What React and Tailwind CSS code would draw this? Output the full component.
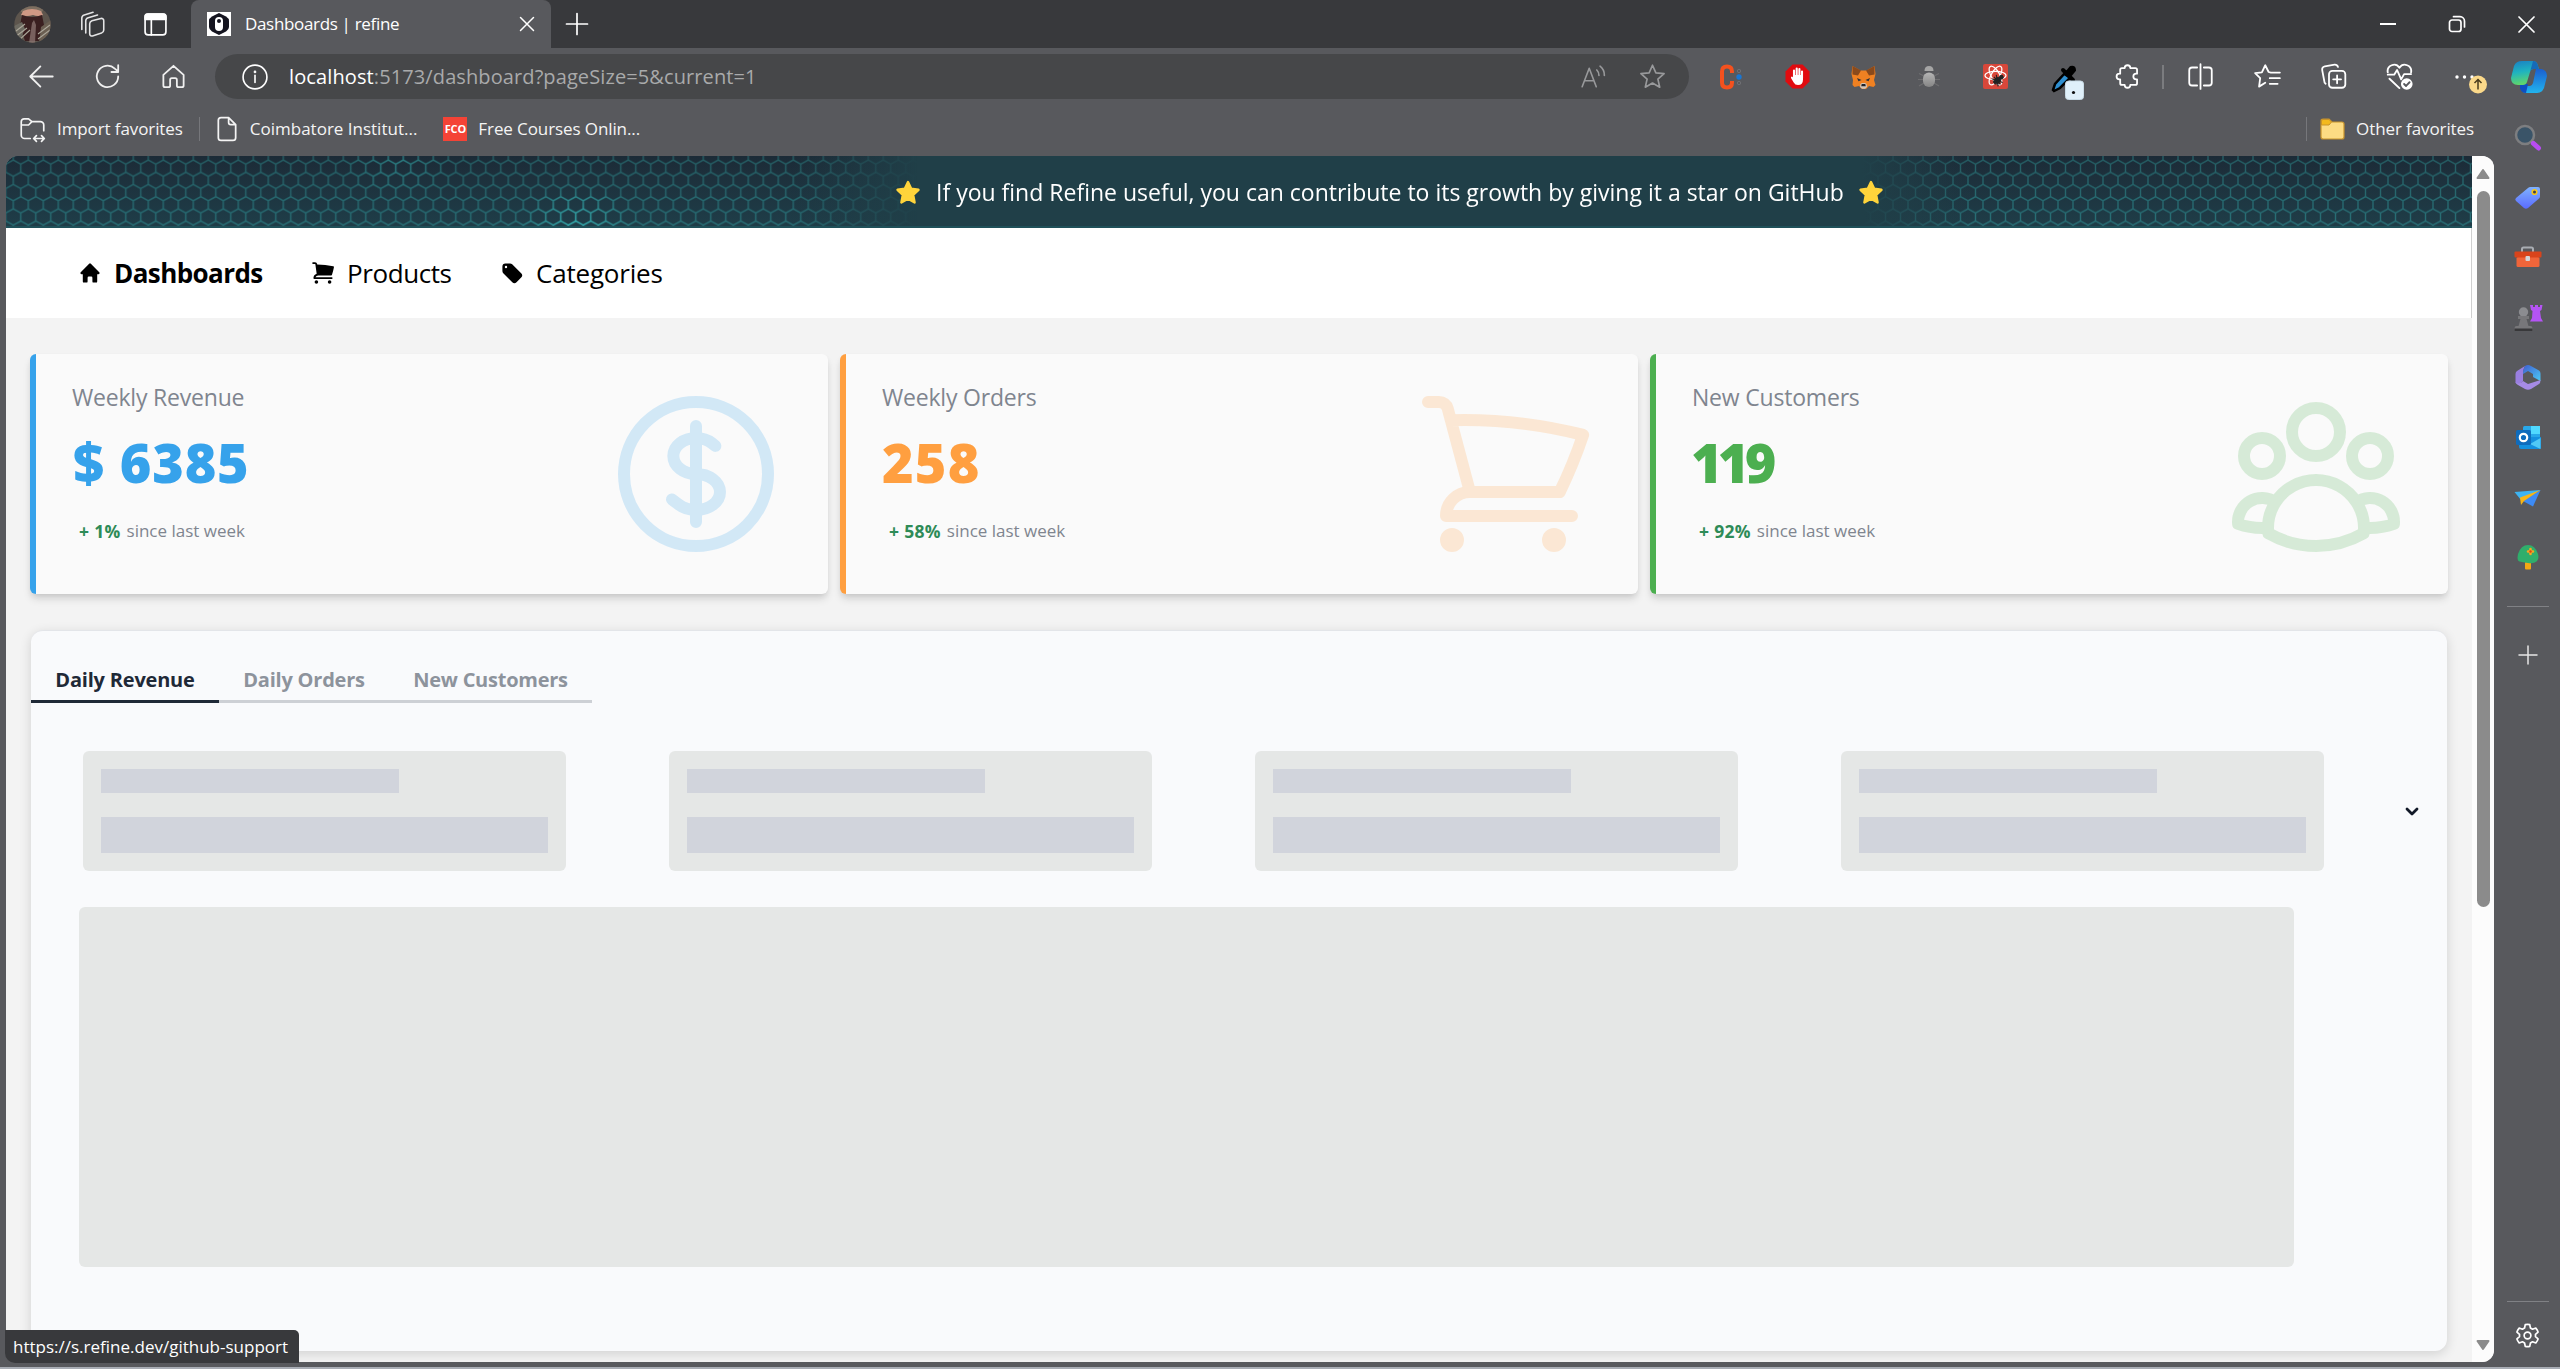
import React from "react";
import {
  HiMiniHome,
  HiMiniShoppingCart,
  HiMiniTag,
  HiOutlineCurrencyDollar,
  HiOutlineShoppingCart,
  HiOutlineUserGroup,
} from "react-icons/hi2";

function Line({ size = 27, vb = 24, w = 1.6, className = "", children }) {
  return (
    <svg
      width={size}
      height={size}
      viewBox={`0 0 ${vb} ${vb}`}
      fill="none"
      stroke="currentColor"
      strokeWidth={w}
      strokeLinecap="round"
      strokeLinejoin="round"
      className={`block shrink-0 ${className}`}
    >
      {children}
    </svg>
  );
}

/* ---------- title bar ---------- */

function Avatar() {
  return (
    <svg width="37" height="37" viewBox="0 0 37 37" className="block shrink-0">
      <defs>
        <clipPath id="avatar"><circle cx="18.5" cy="18.5" r="18.2" /></clipPath>
      </defs>
      <g clipPath="url(#avatar)">
        <rect width="37" height="37" fill="#5d554d" />
        <path d="M6 0h25l-3 6-10 2L7 6z" fill="#7d6f61" />
        <path d="M9 5q9-4 18 0l2 4q-5 2-10 0-6 2-12 0z" fill="#cf9884" />
        <path d="M8 9q10 4 20 0l2 10-5 16H11L6 19z" fill="#3a1f20" />
        <path d="M0 20l8-4 3 7-8 16H0z" fill="#6d6a61" />
        <path d="M27 21l10-7v20l-12 4z" fill="#6b5f52" />
        <path d="M18 17l2-3 2 5-1 18h-6z" fill="#8d7773" opacity=".75" />
        <path d="M1 31l12-9M4 35l12-11M24 28l12-9M24 33l12-9M2 25l9-7" stroke="#aaa598" strokeWidth="1.1" />
      </g>
    </svg>
  );
}

function TitleBar() {
  return (
    <div className="flex h-12 shrink-0 items-stretch bg-[#38393c] text-white">
      <div className="flex w-[191px] items-center pl-[14px]">
        <Avatar />
        <Line size={27} w={1.4} className="ml-[28px] text-[#e4e4e5]">
          <path d="M11.500 8.600l8-2a2 2 0 0 1 2.500 2v8.200a3 3 0 0 1-2 2.800l-8 2.600a2 2 0 0 1-2.500-2v-8.800a3 3 0 0 1 2-2.800z" />
          <path d="M6 19.500V8.700a3 3 0 0 1 2.200-2.800l8.300-2.400" />
          <path d="M2.500 16.500V6.300a3 3 0 0 1 2.200-2.800l7.800-2.300" />
        </Line>
        <Line size={25} w={1.6} className="ml-[37px]">
          <rect x="2" y="2" width="20" height="20" rx="3" />
          <path d="M2 4.500a2.500 2.500 0 0 1 2.500-2.500h15A2.500 2.500 0 0 1 22 4.500V7H2z" fill="currentColor" />
          <path d="M8 7v15" />
        </Line>
      </div>
      <div className="flex w-[360px] items-center rounded-t-[8px] bg-[#58595d] pr-[16px] pl-[16px]">
        <svg width="24" height="24" viewBox="0 0 24 24" className="block shrink-0">
          <rect width="24" height="24" fill="#fff" />
          <path d="M12 1l7 3.600q3 1.800 3 4.400v6q0 2.600-3 4.400L12 23l-7-3.600q-3-1.800-3-4.400V9q0-2.600 3-4.400z" fill="#14141f" />
          <rect x="8" y="5" width="8" height="14" rx="4" fill="#fff" />
          <circle cx="12" cy="9" r="2" fill="#14141f" />
        </svg>
        <span className="ml-[14px] grow text-[17px] tracking-[-0.33px]">Dashboards | refine</span>
        <Line size={16} vb={16} w={1.5}><path d="M1.500 1.500l13 13M14.500 1.500l-13 13" /></Line>
      </div>
      <div className="flex grow items-center pl-[14px]">
        <Line size={24} w={1.7}><path d="M12 1.500v21M1.500 12h21" /></Line>
      </div>
      <div className="flex items-center pr-[25px]">
        <div className="h-[2px] w-4 bg-white" />
        <Line size={18} vb={18} w={1.7} className="ml-[52px]">
          <rect x="1.500" y="5" width="11.500" height="11.500" rx="2.500" />
          <path d="M5.500 1.700h6.500a4.500 4.500 0 0 1 4.500 4.500V12" />
        </Line>
        <Line size={17} vb={17} w={1.7} className="ml-[52px]"><path d="M1 1l15 15M16 1L1 16" /></Line>
      </div>
    </div>
  );
}

/* ---------- toolbar ---------- */

function Cell({ children }) {
  return <div className="flex w-[66px] shrink-0 items-center justify-center">{children}</div>;
}

function Extensions() {
  return (
    <>
      <Cell>
        <svg width="24" height="26" viewBox="0 0 24 26">
          <path d="M13 9V7.500Q13 2.500 8 2.500T3 7.500V18.500Q3 23.500 8 23.500T13 18.500V17" fill="none" stroke="#f4511e" strokeWidth="4" />
          <circle cx="20" cy="7" r="1.700" fill="none" stroke="#6f7074" />
          <circle cx="20" cy="13" r="2.700" fill="#1976d2" />
          <circle cx="20" cy="19" r="1.700" fill="none" stroke="#6f7074" />
        </svg>
      </Cell>
      <Cell>
        <svg width="25" height="25" viewBox="0 0 25 25">
          <path d="M7.500.5h10l7 7v10l-7 7h-10l-7-7v-10z" fill="#e10b0f" />
          <path d="M9 14V6.500M11.700 13V4.500M14.400 13V5M17 14V7.500" stroke="#fff" strokeWidth="2.100" strokeLinecap="round" />
          <path d="M8 11h10v4.500q0 5.500-5 5.500-3 0-4.300-2.600L6 14q-.4-1.300 1-1.400l2 1.700z" fill="#fff" />
        </svg>
      </Cell>
      <Cell>
        <svg width="25" height="24" viewBox="0 0 25 24">
          <path d="M1.500 1l8 4.500h6l8-4.500 1 8-1.500 6 1.500 5-2 2-4.500-1-3 3h-4l-3-3-4.500 1-2-2L2 15 .5 9z" fill="#f08122" />
          <path d="M1.500 1l8.500 4.500-3 5-5.500-1zM23.500 1L15 5.500l3 5 5.500-1z" fill="#8a4a1c" />
          <path d="M6 13l4.500 2-3 1.300zM19 13l-4.500 2 3 1.300z" fill="#2b2f3a" />
          <path d="M9.500 19l1.500-1h3l1.500 1 .5 3-2 1.700h-3L9 22z" fill="#d5c6b8" />
          <path d="M10.700 19h3.600l.5 2.200h-4.600z" fill="#20232b" />
        </svg>
      </Cell>
      <Cell>
        <svg width="22" height="23" viewBox="0 0 22 23">
          <defs>
            <linearGradient id="bug" x1="0" y1="0" x2="0" y2="1">
              <stop offset="0" stopColor="#b5b5b5" /><stop offset="1" stopColor="#858585" />
            </linearGradient>
          </defs>
          <path d="M6 11L1 8.500M5 14.500H0M6 18l-5 3M16 11l5-2.500M17 14.500h5M16 18l5 3" stroke="#6e6e70" strokeWidth="1.200" />
          <path d="M6.500 6q0-5 4.500-5t4.500 5z" fill="#a5a5a5" />
          <rect x="5" y="7.500" width="12" height="14.500" rx="6" fill="url(#bug)" />
        </svg>
      </Cell>
      <Cell>
        <svg width="25" height="25" viewBox="0 0 25 25">
          <rect width="25" height="25" rx="2" fill="#d8473a" />
          <g fill="none" stroke="#fff" strokeWidth="1.200">
            <ellipse cx="12.500" cy="11.500" rx="10.500" ry="4.200" />
            <ellipse cx="12.500" cy="11.500" rx="10.500" ry="4.200" transform="rotate(60 12.500 11.500)" />
            <ellipse cx="12.500" cy="11.500" rx="10.500" ry="4.200" transform="rotate(120 12.500 11.500)" />
          </g>
          <g transform="rotate(50 15 16)" fill="#222" stroke="#222">
            <circle cx="15" cy="11.500" r="1.800" />
            <ellipse cx="15" cy="17" rx="2.500" ry="4" />
            <path d="M10 14l10 6M10 20l10-6M10 17h10" strokeWidth="1.200" />
          </g>
        </svg>
      </Cell>
      <Cell>
        <svg width="36" height="36" viewBox="0 0 36 36" className="translate-x-[5px] translate-y-[5px]">
          <path d="M5 26l2-6L17 9l5 5L12 24l-6 3z" fill="#2f8fd0" stroke="#000" strokeWidth="2.500" />
          <path d="M15 6l10 10M18 10l5-6q3-1 3 2l-5 6z" stroke="#000" strokeWidth="4" fill="#000" strokeLinecap="round" />
          <rect x="17.500" y="17" width="18" height="18.500" rx="3" fill="#e0f0fa" stroke="#c9dbe6" />
          <circle cx="25.500" cy="28.500" r="1.600" fill="#111" />
        </svg>
      </Cell>
      <Cell>
        <Line size={27} w={1.600}>
          <path d="M9.500 4.500a2.500 2.500 0 0 1 5 0H19a1.500 1.500 0 0 1 1.500 1.500v3.500h-.8a2.500 2.500 0 0 0 0 5h.8V18a1.500 1.500 0 0 1-1.500 1.500h-4.500a2.500 2.500 0 0 1-5 0H7A1.500 1.500 0 0 1 5.500 18v-3.500h-.7a2.500 2.500 0 0 1 0-5h.7V6A1.500 1.500 0 0 1 7 4.500z" />
        </Line>
      </Cell>
    </>
  );
}

function Copilot() {
  return (
    <svg width="38" height="34" viewBox="0 0 38 34">
      <defs>
        <linearGradient id="cpA" x1="0" y1="0" x2="0.200" y2="1">
          <stop offset="0" stopColor="#1a7fc4" /><stop offset=".5" stopColor="#1fb3c0" /><stop offset="1" stopColor="#5fd66c" />
        </linearGradient>
        <linearGradient id="cpB" x1="0" y1="0" x2="0" y2="1">
          <stop offset="0" stopColor="#1b5fd0" /><stop offset="1" stopColor="#22b4ee" />
        </linearGradient>
      </defs>
      <path d="M26 9h5q6 1 6 7l-3 12q-2 5-7 5h-11q-4 0-5-5l4-2h5q2 0 3-3z" fill="url(#cpB)" />
      <path d="M10 24h8l-2 9q-5 0-6-5z" fill="#0f4fc0" />
      <path d="M12 1h11q4 0 5 5l1 3h-6q-2 0-3 3l-3 10q-1 3-4 3H8q-7 0-7-7L4 6q2-5 8-5z" fill="url(#cpA)" />
      <path d="M23 1q4 0 5 5l1 3h-6q-2 0-3 3z" fill="#166bb8" />
    </svg>
  );
}

function Toolbar() {
  return (
    <div className="flex h-[57px] shrink-0 items-center pl-[28px] text-white">
      <Line size={27} className="text-[#f0f0f0]"><path d="M22 12H2.500M11 3l-9 9 9 9" /></Line>
      <Line size={27} className="ml-[39px] text-[#f0f0f0]">
        <path d="M21.500 12a9.500 9.500 0 1 1-3-7L21.500 7.500M21.500 2v6h-6" />
      </Line>
      <Line size={27} className="ml-[39px] text-[#f0f0f0]">
        <path d="M3 10.500L12 2.500l9 8V20a1.500 1.500 0 0 1-1.500 1.500h-3A1.500 1.500 0 0 1 15 20v-5a1.500 1.500 0 0 0-1.500-1.500h-3A1.500 1.500 0 0 0 9 15v5a1.500 1.500 0 0 1-1.500 1.500h-3A1.500 1.500 0 0 1 3 20z" />
      </Line>
      <div className="ml-[28px] flex h-[45px] w-[1474px] shrink-0 items-center rounded-full bg-[#464749] pr-[23px] pl-[27px]">
        <Line size={26} w={1.500}>
          <circle cx="12" cy="12" r="11" /><path d="M12 10.500v6.500" /><circle cx="12" cy="7.300" r=".5" />
        </Line>
        <span className="ml-[21px] text-[20px] tracking-[0.12px]">localhost</span>
        <span className="grow text-[20px] tracking-[0.1px] text-[#a9aaab]">:5173/dashboard?pageSize=5&amp;current=1</span>
        <Line size={26} w={1.500} className="text-[#98999b]">
          <path d="M2 21L8.500 4 15 21M4.300 15.500h8.500M15.500 5.500q2 2 2 5M18.500 2q4 3 4 8.500" />
        </Line>
        <Line size={27} w={1.500} className="ml-[33px] text-[#98999b]">
          <path d="M12 2l3 6.700 7.300.7-5.500 4.900 1.600 7.200L12 17.800l-6.400 3.700 1.600-7.200L1.700 9.400 9 8.700z" />
        </Line>
      </div>
      <div className="flex grow items-center pl-[9px]">
        <Extensions />
        <div className="mr-[3px] ml-[2px] h-6 w-[2px] shrink-0 bg-[#7b7c7f]" />
        <Cell>
          <Line size={27}>
            <path d="M12 1v22M9 4H4.500A2.500 2.500 0 0 0 2 6.500v11A2.500 2.500 0 0 0 4.500 20H9M15 4h4.500A2.500 2.500 0 0 1 22 6.500v11a2.500 2.500 0 0 1-2.500 2.500H15" />
          </Line>
        </Cell>
        <Cell>
          <Line size={27} className="translate-x-px">
            <path d="M15 8.500L13 8l-3-6-3 6.300-6 .7 4.500 4.500L4.500 21l5.500-3.500M15 8.500h8M14 13.500h9M14 18.500h7" />
          </Line>
        </Cell>
        <Cell>
          <Line size={27} className="translate-x-px">
            <rect x="8" y="7" width="14.500" height="15" rx="3" />
            <path d="M15.200 11v7M11.700 14.500h7M5 18.500A3 3 0 0 1 3.800 16L2 6.500A3 3 0 0 1 4.300 3L13 1.500a3 3 0 0 1 3 2" />
          </Line>
        </Cell>
        <Cell>
          <Line size={28} className="translate-x-[2px]">
            <path d="M1.500 10H7l2.500-4 3.500 8 2.500-4.500h6M3 13.500l8.500 8M1.500 8A5.500 5.500 0 0 1 11.500 4a5.500 5.500 0 0 1 10 4" />
            <circle cx="17.800" cy="18" r="5" fill="currentColor" stroke="none" />
            <path d="M15.500 18l1.700 1.700 3-3.200" stroke="#58595d" />
          </Line>
        </Cell>
        <Cell>
          <svg width="34" height="30" viewBox="0 0 34 30" className="translate-x-[7px] translate-y-[2px]">
            <g fill="#fff"><circle cx="3" cy="13" r="1.700" /><circle cx="10.500" cy="13" r="1.700" /><circle cx="18" cy="13" r="1.700" /></g>
            <circle cx="24" cy="20.500" r="9" fill="#fbd98a" />
            <path d="M24 25.500v-10M20.500 19l3.500-3.500 3.500 3.500" fill="none" stroke="#4b3d1d" strokeWidth="1.500" />
          </svg>
        </Cell>
        <div className="flex grow justify-center"><Copilot /></div>
      </div>
    </div>
  );
}

function FavoritesBar() {
  return (
    <div className="flex h-[51px] shrink-0 items-center pb-[3px] pl-[19px] text-[17px] text-[#f4f4f4]">
      <Line size={27} w={1.500}>
        <path d="M10 20H5a3 3 0 0 1-3-3V5a2.500 2.500 0 0 1 2.500-2.500h4L11.500 5H19a3 3 0 0 1 3 3v5M2 8h6.500l3-3M13 20h9.500M15.500 17.500L13 20l2.500 2.500M20 17.500l2.500 2.500-2.500 2.500" />
      </Line>
      <span className="ml-[11px] tracking-[-0.1px]">Import favorites</span>
      <div className="ml-[16px] h-6 w-px bg-[#76777b]" />
      <Line size={26} w={1.600} className="ml-[14px]">
        <path d="M6.500 1.500h7l6.500 6.500v12a2.500 2.500 0 0 1-2.500 2.500h-11A2.500 2.500 0 0 1 4 20V4a2.500 2.500 0 0 1 2.500-2.500zM13.500 1.500V6a2 2 0 0 0 2 2H20" />
      </Line>
      <span className="ml-[10px]">Coimbatore Institut...</span>
      <div className="ml-[26px] flex h-6 w-6 items-center justify-center bg-[#f44336] text-[11px] font-bold tracking-[-0.2px] text-white">FCO</div>
      <span className="ml-[11px] grow tracking-[-0.1px]">Free Courses Onlin...</span>
      <div className="h-6 w-px bg-[#76777b]" />
      <svg width="25" height="24" viewBox="0 0 25 24" className="ml-[13px]">
        <path d="M1 4q0-2 2-2h6l3 3h10q2 0 2 2v13q0 2-2 2H3q-2 0-2-2z" fill="#fddc83" stroke="#c8932a" strokeWidth="1.200" />
        <path d="M1.500 8V4q0-1.500 1.500-1.500h6L11.500 5 9 8z" fill="#f3b91d" stroke="#c8932a" />
      </svg>
      <span className="mr-[20px] ml-[11px] tracking-[-0.1px]">Other favorites</span>
    </div>
  );
}

/* ---------- edge sidebar ---------- */

const sideIcons = [
  <g key="search">
    <circle cx="12" cy="12" r="9" fill="#3a5468" stroke="#7d7e80" strokeWidth="2.500" />
    <path d="M18 18l2 2" stroke="#85868a" strokeWidth="3" />
    <path d="M20.500 20.500l5 4.500" stroke="#b94cf2" strokeWidth="5" strokeLinecap="round" />
  </g>,
  <g key="tag">
    <path d="M3 15L15 5q1-1 2.500-1H25q2 0 2 2v7.500q0 1-1 2L15 25q-2 1.500-4 0l-8-7q-1.500-1.500 0-3z" fill="url(#sTag)" />
    <circle cx="21.500" cy="9" r="2.300" fill="#3c3f55" stroke="#f5c518" strokeWidth="1.600" />
  </g>,
  <g key="box">
    <path d="M9 9V6q0-1.500 1.500-1.500h8Q20 4.500 20 6v3" fill="none" stroke="#a9adb3" strokeWidth="2" />
    <rect x="3.500" y="14" width="23" height="10" rx="1.500" fill="#f0653a" />
    <rect x="1.500" y="8.500" width="27" height="6" rx="1" fill="#d9441b" />
    <rect x="12.500" y="13" width="4.500" height="5" rx="1" fill="#d3d6d9" />
  </g>,
  <g key="chess">
    <path d="M17 2h3v2h2V2h3v2h2V2h2.500L28.500 7l-1.500 1 1 7 2 3.500H17l2-3.500 .5-7-1.500-1z" fill="#b554f5" />
    <circle cx="10.500" cy="9" r="4.700" fill="#8b8c90" />
    <path d="M5 13h11v3h-2.500l2 7h2q2 0 2 2.200V28H1.500v-2.800Q1.500 23 3.500 23h2l2-7H5z" fill="#77777a" />
    <path d="M1.500 25.500h18V28h-18z" fill="#38383a" />
  </g>,
  <g key="m365">
    <path d="M12 3L4 8q-1.500 1-1.500 3v9q5 2 7.500-2V10q0-4 2-7z" fill="#9a7fe0" />
    <path d="M12 3q3-2 6 0l8 4.500q1.500 1 1.500 3V18L20 14v-3l-5-3-5 3q0-5 2-8z" fill="url(#s365)" />
    <path d="M27.500 17q0 3-1.500 4l-8 5q-3 1.500-6 0l-7-4q-1.500-1-2.500-2.500 5 2 7.500-1.500l5 3 12.500-4z" fill="#a68be6" />
  </g>,
  <g key="outlook">
    <rect x="10" y="3" width="17" height="16" rx="1.500" fill="#28a8ea" />
    <rect x="18" y="3" width="9" height="8" fill="#50d9ff" />
    <path d="M6 14h22v11q0 1-1.500 1H8q-2 0-2-2z" fill="#1490df" />
    <path d="M27.500 15L17 21l10.500 5z" fill="#50c8f5" />
    <rect x="3" y="7" width="15" height="15" rx="1.500" fill="#0f6cbd" />
    <circle cx="10.500" cy="14.500" r="3.700" fill="none" stroke="#fff" strokeWidth="2.200" />
  </g>,
  <g key="send">
    <path d="M1.500 9L27.500 7 14 15l-6 2z" fill="#3db4f2" />
    <path d="M27.500 7L20 23.500 10 18z" fill="#3d8bf5" />
    <path d="M27.500 7L7 14.500 8 22l3-4z" fill="#f8b616" />
  </g>,
  <g key="tree">
    <rect x="12" y="19" width="6" height="7.500" rx="1" fill="#f2a814" />
    <path d="M15 2q7 0 10 9 1.500 5-1.500 7.500T15 20t-8.500-1.500T5 11q3-9 10-9z" fill="#2fae6b" />
    <path d="M17.500 6v5M15 8.500h5" stroke="#f5a623" strokeWidth="2.600" strokeLinecap="round" />
    <circle cx="17.500" cy="8.500" r="1.200" fill="#d84315" />
  </g>,
];

function EdgeSidebar() {
  return (
    <div className="flex w-[66px] shrink-0 flex-col items-center pt-[3px] pl-px text-white">
      <svg width="0" height="0" className="absolute">
        <defs>
          <linearGradient id="sTag" x1="0" y1="0" x2="0" y2="1"><stop offset="0" stopColor="#7fb2ff" /><stop offset="1" stopColor="#5a6bff" /></linearGradient>
          <linearGradient id="s365" x1="0" y1="0" x2="1" y2="1"><stop offset="0" stopColor="#3f5fd0" /><stop offset="1" stopColor="#4cc9f5" /></linearGradient>
        </defs>
      </svg>
      {sideIcons.map((g, i) => (
        <div key={i} className="flex h-[60px] items-center justify-center">
          <svg width="30" height="30" viewBox="0 0 30 30">{g}</svg>
        </div>
      ))}
      <div className="mt-[18px] h-px w-[42px] bg-[#808185]" />
      <Line size={20} vb={20} w={1.500} className="mt-[38px] text-[#e6e6e6]"><path d="M10 1v18M1 10h18" /></Line>
      <div className="grow" />
      <div className="h-px w-[42px] bg-[#808185]" />
      <Line size={27} w={1.500} className="mt-[20px] mb-[18px]">
        <path d="M10 1.800a12 12 0 0 1 4 0l.6 3 1.900 1.100 2.900-1a10 10 0 0 1 2 3.500l-2.300 2v2.200l2.300 2a10 10 0 0 1-2 3.500l-2.900-1-1.900 1.100-.6 3a12 12 0 0 1-4 0l-.6-3-1.900-1.100-2.900 1a10 10 0 0 1-2-3.500l2.300-2v-2.200l-2.300-2a10 10 0 0 1 2-3.500l2.900 1 1.900-1.100z" transform="translate(0 .5)" />
        <circle cx="12" cy="12" r="3" />
      </Line>
    </div>
  );
}

/* ---------- page ---------- */

function Star() {
  return (
    <svg width="26" height="25" viewBox="0 0 26 25" className="block shrink-0">
      <path d="M13 2l3.200 6.800 7.300 1-5.300 5.200 1.400 7.500L13 18.800l-6.600 3.700 1.400-7.500L2.500 9.800l7.300-1z" fill="#ffd43b" stroke="#ffd43b" strokeWidth="2.400" strokeLinejoin="round" />
    </svg>
  );
}

function HexField({ id, width, offset, flip, glow }) {
  return (
    <svg width={width} height="72" viewBox={`0 0 ${width} 72`} className="block shrink-0">
      <defs>
        <pattern id={`${id}-hex`} width="15" height="24.4" patternUnits="userSpaceOnUse" patternTransform={`translate(${offset} 0)`}>
          <path d="M0 0V4.100L7.500 8.200V16.300L0 20.400V24.400M15 0V4.100L7.500 8.200M7.500 16.300L15 20.400V24.400" fill="none" stroke="#fff" strokeWidth="1.400" />
        </pattern>
        <mask id={`${id}-lines`}><rect width={width} height="72" fill={`url(#${id}-hex)`} /></mask>
        <linearGradient id={`${id}-bg`} x1="0" y1="0" x2="0" y2="1">
          <stop offset="0" stopColor="#1c2b37" /><stop offset="1" stopColor="#1f3e49" />
        </linearGradient>
        <linearGradient id={`${id}-stroke`} x1="0" y1="0" x2="0" y2="1">
          <stop offset="0" stopColor="#255e64" /><stop offset="1" stopColor="#287077" />
        </linearGradient>
        <radialGradient id={`${id}-glow`}><stop offset="0" stopColor="#35b4b6" /><stop offset="1" stopColor="#35b4b6" stopOpacity="0" /></radialGradient>
        <linearGradient id={`${id}-fade`} x1={flip ? 1 : 0} x2={flip ? 0 : 1} y1="0" y2="0">
          <stop offset={flip ? 0.82 : 0.86} stopColor="#203f48" stopOpacity="0" /><stop offset="1" stopColor="#203f48" />
        </linearGradient>
      </defs>
      <rect width={width} height="72" fill={`url(#${id}-bg)`} />
      <g mask={`url(#${id}-lines)`}>
        <rect width={width} height="72" fill={`url(#${id}-stroke)`} />
        {glow && (
          <>
            <ellipse cx="570" cy="68" rx="62" ry="42" fill={`url(#${id}-glow)`} />
            <ellipse cx="392" cy="6" rx="60" ry="40" fill={`url(#${id}-glow)`} opacity=".4" />
          </>
        )}
      </g>
      <rect width={width} height="72" fill={`url(#${id}-fade)`} />
    </svg>
  );
}

function Banner() {
  return (
    <div className="relative flex h-[72px] shrink-0 justify-between bg-[#203f48]">
      <HexField id="left" width={912} offset={7.3} glow />
      <HexField id="right" width={610} offset={1} flip />
      <div className="absolute inset-0 flex items-center pl-[889px] text-[23px] text-white">
        <Star />
        <span className="ml-[15px] whitespace-nowrap">
          If you find Refine useful, you can contribute to its growth by giving it a star on GitHub
        </span>
        <span className="ml-[14px]"><Star /></span>
      </div>
      <div className="absolute inset-x-0 bottom-0 h-[2px] bg-[#1f5059]" />
    </div>
  );
}

function Nav() {
  return (
    <div className="flex h-[90px] shrink-0 items-center gap-12 border-r border-[#cfcfcf] bg-white pl-[72px] text-[26px] text-black">
      <div className="flex items-center gap-3">
        <HiMiniHome className="size-6" />
        <span className="mt-px w-[149px] font-bold tracking-[-0.58px]">Dashboards</span>
      </div>
      <div className="flex items-center gap-3">
        <HiMiniShoppingCart className="size-6" />
        <span className="mt-px w-[105px] tracking-[-0.42px]">Products</span>
      </div>
      <div className="flex items-center gap-3">
        <HiMiniTag className="size-6" />
        <span className="mt-px tracking-[-0.2px]">Categories</span>
      </div>
    </div>
  );
}

const stats = [
  { title: "Weekly Revenue", value: "$ 6385", delta: "+ 1%", Icon: HiOutlineCurrencyDollar, border: "border-[#36a2eb]", color: "text-[#36a2eb]", track: "pl-px tracking-[0.8px]" },
  { title: "Weekly Orders", value: "258", delta: "+ 58%", Icon: HiOutlineShoppingCart, border: "border-[#ff9f40]", color: "text-[#ff9f40]", track: "tracking-[1.2px]" },
  { title: "New Customers", value: "119", delta: "+ 92%", Icon: HiOutlineUserGroup, border: "border-[#4caf50]", color: "text-[#4caf50]", track: "-ml-px tracking-[-4.8px]" },
];

function StatCard({ title, value, delta, Icon, border, color, track }) {
  return (
    <div className={`flex h-60 w-[798px] justify-between rounded-[6px] border-l-[6px] bg-[#fafafa] p-6 pl-[36px] pr-[36px] shadow-[0_6px_9px_-1px_rgba(0,0,0,0.12),0_3px_6px_-2px_rgba(0,0,0,0.10)] ${border}`}>
      <div className="flex flex-col whitespace-nowrap text-[#7f858f]">
        <div className="mt-px h-9 text-[23px]/9 tracking-[-0.2px]">{title}</div>
        <div className={`mt-px h-[92px] text-[54px]/[92px] font-extrabold ${color} ${track}`}>{value}</div>
        <div className="mt-[5px] ml-[7px] flex h-9 items-center text-[17px]">
          <span className="text-[17.5px] font-bold tracking-[0.3px] text-[#2e8b57]">{delta}</span>
          <span className="ml-[6px]">since last week</span>
        </div>
      </div>
      <Icon className={`size-[192px] opacity-20 ${color}`} />
    </div>
  );
}

function SkeletonCard() {
  return (
    <div className="flex h-[120px] w-[483px] flex-col rounded-[6px] bg-[#e5e7e6] px-[18px] pt-[18px]">
      <div className="h-6 w-[298px] bg-[#d1d4dc]" />
      <div className="mt-6 h-9 w-[447px] bg-[#d1d4dc]" />
    </div>
  );
}

function ChartPanel() {
  return (
    <div className="mt-9 ml-px flex h-[721px] w-[2416px] shrink-0 flex-col rounded-[12px] border-t border-[#e3e5e9] bg-[#f9fafc] shadow-[0_3px_12px_rgba(0,0,0,0.14)]">
      <div className="mt-[27px] flex text-[20px] font-bold">
        <div className="flex h-[45px] w-[188px] items-center justify-center border-b-[3px] border-[#1f2a37] pt-[2px] tracking-[-0.2px] text-[#1f2937]">Daily Revenue</div>
        <div className="flex h-[45px] w-[170px] items-center justify-center border-b-[3px] border-[#cdd0d5] pt-[2px] tracking-[-0.22px] text-[#8d939c]">Daily Orders</div>
        <div className="flex h-[45px] w-[203px] items-center justify-center border-b-[3px] border-[#cdd0d5] pt-[2px] tracking-[-0.25px] text-[#8d939c]">New Customers</div>
      </div>
      <div className="mt-[48px] flex items-center pl-[52px]">
        <div className="flex gap-[103px]">
          <SkeletonCard />
          <SkeletonCard />
          <SkeletonCard />
          <SkeletonCard />
        </div>
        <Line size={16} vb={16} w={2.800} className="ml-[80px] text-[#111827]"><path d="M3 6l5 5 5-5" /></Line>
      </div>
      <div className="mt-9 ml-[48px] h-[360px] w-[2215px] rounded-[6px] bg-[#e5e7e6]" />
    </div>
  );
}

function Scrollbar() {
  return (
    <div className="flex w-[22px] shrink-0 flex-col items-center bg-[#fcfcfc] pt-[12px] pb-[11px]">
      <svg width="16" height="12" viewBox="0 0 16 12"><path d="M8 2l5.500 8h-11z" fill="#8b8b8b" stroke="#8b8b8b" strokeWidth="2" strokeLinejoin="round" /></svg>
      <div className="mt-[11px] h-[716px] w-[13px] rounded-full bg-[#8b8b8b]" />
      <div className="grow" />
      <svg width="16" height="12" viewBox="0 0 16 12"><path d="M8 10L2.500 2h11z" fill="#8b8b8b" stroke="#8b8b8b" strokeWidth="2" strokeLinejoin="round" /></svg>
    </div>
  );
}

function Page() {
  return (
    <div className="relative ml-[6px] flex h-[1206px] shrink-0 overflow-hidden rounded-[12px] bg-[#f3f3f3]">
      <div className="flex w-[2466px] shrink-0 flex-col">
        <Banner />
        <Nav />
        <div className="flex flex-col pt-9 pl-6">
          <div className="flex gap-3">
            {stats.map((s) => <StatCard key={s.title} {...s} />)}
          </div>
          <ChartPanel />
        </div>
      </div>
      <Scrollbar />
    </div>
  );
}

export default function App() {
  return (
    <div className="relative flex h-[1369px] w-[2560px] flex-col overflow-hidden border-b-2 border-[#a9adb5] bg-[#58595d] font-['Open_Sans','Noto_Sans',sans-serif]">
      <TitleBar />
      <Toolbar />
      <div className="flex grow">
        <div className="flex w-[2494px] shrink-0 flex-col">
          <FavoritesBar />
          <Page />
        </div>
        <EdgeSidebar />
      </div>
      <div className="absolute bottom-[4px] left-[5px] flex h-[33px] w-[294px] items-center rounded-tr-[5px] rounded-bl-[10px] bg-[#38393c] pl-[8px] text-[17px] text-white">
        https://s.refine.dev/github-support
      </div>
    </div>
  );
}
